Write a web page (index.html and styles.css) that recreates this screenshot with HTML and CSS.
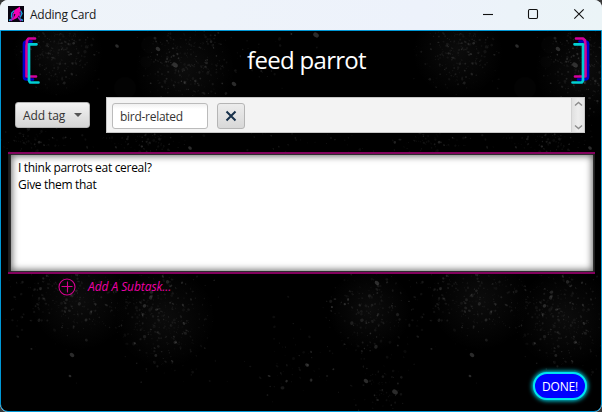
FILE: index.html
```html
<!DOCTYPE html>
<html lang="en">
<head>
<meta charset="utf-8">
<title>Adding Card</title>
<link rel="stylesheet" href="styles.css">
</head>
<body>
<div class="window">
  <header class="titlebar">
    <svg class="app-icon" viewBox="0 0 16 16" width="16" height="16">
      <rect width="16" height="16" fill="#080310"/>
      <path d="M6.500 4.500 3.700 7 3.500 11 5.500 12.500M12.500 4.500 14 7.500 12 11.500M1 14.500 4.500 13M11 12.500l4 2" fill="none" stroke="#18a0dc" stroke-width="1.400"/>
      <path d="M5.500 7 5 11 3 15M12 6.500 11.500 10.500M10 11l3 4" fill="none" stroke="#a020c8" stroke-width="1.500"/>
      <path d="M12 .5 6.500 4 5.500 7.500 7.500 8.500 6 11 4 14.500 9 12 11.500 8.500 11.500 6.500 13 4 12 3z" fill="#f800b4"/>
    </svg>
    <span class="title">Adding Card</span>
    <svg class="win-btns" viewBox="0 0 104 16" width="104" height="16" fill="none" stroke="#111" stroke-width="1.100">
      <path d="M0 8.500h10"/>
      <rect x="45.500" y="3.500" width="9" height="9" rx="1.200"/>
      <path d="m91.300 3.300 9.400 9.400m0-9.400-9.400 9.400"/>
    </svg>
  </header>
  <main class="body">
    <svg class="dust" width="600" height="380" viewBox="1 31 600 380">
      <defs><radialGradient id="haze"><stop offset="0" stop-color="#aaa"/><stop offset="1" stop-color="#aaa" stop-opacity="0"/></radialGradient></defs>
      <g id="dust"></g>
    </svg>
    <div class="heading">
      <svg class="bracket" viewBox="0 0 20 50" width="20" height="50" fill="none" stroke-width="2.700" stroke-linecap="round" stroke-linejoin="round">
        <path d="M11.500 5.500H6.500Q4 5.500 4 8V40.500Q4 43.500 6.500 43.500H13" stroke="#0000cc"/>
        <path d="M15 2.500H8.500L7 4.500 6.500 10V40.500H16" stroke="#d4009c"/>
        <path d="M16.500 8.300H9V44.500L10 46.500H18.500" stroke="#00cfd4"/>
      </svg>
      <h1>feed parrot</h1>
      <svg class="bracket flip" viewBox="0 0 20 50" width="20" height="50" fill="none" stroke-width="2.700" stroke-linecap="round" stroke-linejoin="round">
        <path d="M11.500 5.500H5.500Q3 5.500 3 8V40.500Q3 43.500 6 43.500H13" stroke="#0000cc"/>
        <path d="M15 2.500H8L6 4.500 5.500 10V40.500H16" stroke="#d4009c"/>
        <path d="M16.500 8.300H8V44.500L9 46.500H18.500" stroke="#00cfd4"/>
      </svg>
    </div>
    <div class="tags">
      <button class="add-tag"><span>Add tag</span><i class="caret"></i></button>
      <div class="tag-list">
        <div class="tag-field"><span>bird-related</span></div>
        <button class="remove"><svg width="12" height="12" viewBox="0 0 12 12"><path d="m1.500 1.500 9 9m0-9-9 9" fill="none" stroke="#17304a" stroke-width="2"/></svg></button>
        <div class="scroll">
          <svg width="9" height="6" viewBox="0 0 9 6"><path d="m1 4.500 3.500-3 3.500 3" fill="none" stroke="#8c8c8c" stroke-width="1.400"/></svg>
          <svg width="9" height="6" viewBox="0 0 9 6"><path d="m1 1.500 3.500 3 3.500-3" fill="none" stroke="#8c8c8c" stroke-width="1.400"/></svg>
        </div>
      </div>
    </div>
    <div class="note"><p>I think parrots eat cereal?<br>Give them that</p></div>
    <div class="subtask">
      <svg width="18" height="18" viewBox="0 0 18 18" fill="none" stroke="#d4008f" stroke-width="1.100"><circle cx="9" cy="9" r="8"/><path d="M9.500 3.500v11M3.500 8.500h11"/></svg>
      <span>Add A Subtask...</span>
    </div>
    <div class="footer"><button class="done"><span>DONE!</span></button></div>
  </main>
</div>
<script src="dust.js"></script>
</body>
</html>
```

FILE: styles.css
```css
* { box-sizing: border-box; }
body { margin: 0; background: #3a3a3a; font-family: "Open Sans", "Noto Sans", sans-serif; font-size: 12px; overflow: hidden; }
button { font: inherit; margin: 0; padding: 0; }
.window { width: 602px; height: 412px; border-radius: 8px; overflow: hidden; display: flex; flex-direction: column; background: #eff4fa; }
.titlebar { height: 30px; flex: none; display: flex; align-items: center; padding: 0 15px 2px 8px; background: linear-gradient(90deg, #eff4f9, #edf2fb 70%, #ebf4f7); color: #191919; }
.app-icon { margin-right: 6px; }
.title { letter-spacing: -.25px; white-space: nowrap; padding-top: 1px; }
.win-btns { margin-left: auto; }
.body { position: relative; flex: 1; min-height: 0; border: 1px solid #0098d6; border-radius: 0 0 8px 8px; background: #000; display: flex; flex-direction: column; overflow: hidden; }
.dust { position: absolute; inset: 0; }
.heading, .tags, .note, .subtask, .footer { position: relative; flex: none; }
.heading { height: 66px; display: flex; justify-content: space-between; padding: 5px 10px 0 19px; }
h1 { margin: 7px 0 0 2px; font-size: 24px; line-height: 34px; font-weight: 400; color: #fff; letter-spacing: -.7px; white-space: nowrap; }
.flip { transform: scaleX(-1); }
.tags { height: 36px; display: flex; padding: 0 16px 0 14px; }
.add-tag { width: 75px; height: 26px; margin: 5px 16px 0 0; border: 1px solid #b4b4b4; border-radius: 3px; background: linear-gradient(#f3f3f3, #d4d4d4); color: #333; display: flex; align-items: center; padding-left: 7px; }
.add-tag span { white-space: nowrap; letter-spacing: -.1px; }
.caret { border: 4px solid transparent; border-top: 4px solid #555; border-bottom: 0; margin-left: 9px; }
.tag-list { flex: 1; background: #f3f3f3; border: 1px solid #c8c8c8; display: flex; padding-left: 5px; }
.tag-field { width: 96px; height: 26px; margin: 5px 9px 0 0; background: linear-gradient(#f0f0f0, #fff 5px); border: 1px solid #bbb; border-radius: 3px; color: #333; padding-left: 7px; line-height: 26px; letter-spacing: -.28px; white-space: nowrap; }
.remove { width: 28px; height: 26px; margin-top: 5px; border: 1px solid #b5b5b5; border-radius: 3px; background: linear-gradient(#ececec, #d8d8d8); display: flex; align-items: center; justify-content: center; }
.scroll { width: 13px; margin-left: auto; background: linear-gradient(90deg, #e0e0e0, #ededed 50%, #e3e3e3); border-left: 1px solid #d2d2d2; display: flex; flex-direction: column; justify-content: space-between; align-items: center; padding: 3px 0 2px; }
.note { height: 122px; margin: 19px 6px 0 7px; border: 2px solid #85005f; border-width: 2px 0; background: #1c1c1c; padding: 1px 2px 1px 3px; }
.note p { margin: 0; height: 116px; padding: 4px 7px; line-height: 17px; color: #000; background: #fff; box-shadow: inset 0 0 7px 1px #0009, 0 0 2px #555; letter-spacing: -.31px; white-space: nowrap; }
.subtask { height: 26px; margin: 0 0 0 57px; padding-top: 4px; display: flex; color: #f000a8; font-style: italic; line-height: 18px; }
.subtask span { margin-left: 12px; letter-spacing: -.07px; white-space: nowrap; }
.footer { margin-top: auto; height: 39px; display: flex; justify-content: flex-end; padding-right: 14px; }
.done { width: 54px; height: 28px; border: 2px solid #00e4f0; border-radius: 14px; background: #00f; color: #fff; box-shadow: 0 0 4px 1px #00d4e4; display: flex; align-items: center; justify-content: center; }
.done span { white-space: nowrap; letter-spacing: -.2px; }
```

FILE: dust.js
```js
// Grey dust texture, repeated every 400px.
let seed = 71;
const rnd = () => (seed = (seed * 16807) % 2147483647) / 2147483647;
// Each cluster: x, y, horizontal spread, vertical spread, count.
const clusters = [
  [58, 52, 25, 24, 260], [185, 65, 28, 32, 340], [245, 55, 45, 22, 45],
  [145, 140, 30, 12, 130], [35, 143, 28, 12, 80], [320, 140, 40, 15, 55],
  [75, 300, 45, 25, 320], [165, 318, 25, 32, 340], [370, 310, 25, 30, 220],
  [295, 365, 28, 30, 60], [380, 385, 18, 20, 80], [200, 220, 190, 190, 60]
];
const gauss = () => (rnd() + rnd() + rnd() - 1.5) * 1.5;
let out = "";
const speck = (x, y, rx, ry, a, shade, fill = "#aaa") => {
  for (const shift of [0, 400]) {
    out += `<ellipse cx="${x + shift}" cy="${y}" rx="${rx}" ry="${ry}" fill="${fill}" opacity="${shade}" transform="rotate(${a} ${x + shift} ${y})"/>`;
  }
};
for (const [x, y, w, h, n] of clusters) {
  for (let i = 0; i < n; i++) {
    const r = .4 + rnd() * rnd() * 1.5;
    speck(x + gauss() * w, y + gauss() * h, r, r * (.5 + rnd() * .7), rnd() * 90, .06 + rnd() * rnd() * .2);
  }
}
[[58, 52, 45], [185, 70, 50], [80, 300, 50], [165, 318, 50], [370, 310, 42]]
  .forEach(([x, y, r]) => speck(x, y, r, r, 0, .07, "url(#haze)"));
[[146, 62, 6], [150, 45, 9], [125, 88, 11]]
  .forEach(([x, y, r]) => speck(x, y, r, r, 0, .02));
[[158, 49, 2.5], [117, 46, 2], [175, 65, 3], [316, 35, 3], [234, 84, 2.5], [190, 148, 2], [377, 283, 2.5], [72, 355, 2.5], [307, 365, 2], [395, 392, 3], [366, 381, 2.5], [70, 376, 1.500]]
  .forEach(([x, y, r]) => speck(x, y, r, r * .75, 35, .25));
document.getElementById("dust").innerHTML = out;
```
